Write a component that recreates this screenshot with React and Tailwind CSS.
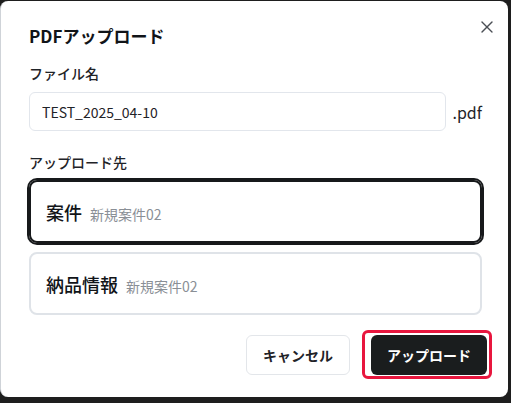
import { X } from 'lucide-react';

const targets = [
  { key: 'project', label: '案件', sub: '新規案件02' },
  { key: 'delivery', label: '納品情報', sub: '新規案件02' },
];

function App() {
  const selected = 'project';

  return (
    <div
      className="w-[511px] h-[403px] bg-[#1e1e1e] pt-[1px] overflow-hidden"
      style={{ fontFamily: '"Noto Sans CJK JP", "Noto Sans", sans-serif' }}
    >
      <div className="relative w-[508px] h-[396px] bg-white rounded-[8px] border-l border-[#cfd3d8] pl-[28px] pr-[26px] pt-[21px] flex flex-col">
        {/* Close */}
        <button className="absolute right-[11px] top-[16px] text-[#4b4f55]">
          <X size={20} strokeWidth={1.6} />
        </button>

        <h2 className="text-[17px] leading-7 font-semibold text-[#111418]">PDFアップロード</h2>

        {/* File name */}
        <label className="mt-[13px] text-sm leading-5 font-medium text-[#1f2328]">ファイル名</label>
        <div className="mt-[9px] flex items-center gap-[7px]">
          <input
            className="flex-1 h-[39px] border border-[#e2e6ec] rounded-md px-3 text-sm text-[#1f2328] outline-none"
            defaultValue="TEST_2025_04-10"
          />
          <span className="text-base text-[#1f2328]">.pdf</span>
        </div>

        {/* Destination */}
        <label className="mt-[21px] text-sm leading-5 font-medium text-[#1f2328]">アップロード先</label>
        <div className="mt-[8px] flex flex-col gap-[9px]">
          {targets.map((t) => (
            <div
              key={t.key}
              className={`h-[63px] rounded-lg border-2 px-[15px] flex items-center ${
                selected === t.key ? 'border-[#17191b] ring-2 ring-[#17191b]' : 'border-[#dfe3e8]'
              }`}
            >
              <div className="flex items-baseline gap-2">
                <span className="text-lg font-medium text-[#111418]">{t.label}</span>
                <span className="text-sm text-[#8a8f96]">{t.sub}</span>
              </div>
            </div>
          ))}
        </div>

        {/* Footer */}
        <div className="mt-[20px] -mr-[5px] flex justify-end gap-[21px]">
          <button className="h-[40px] w-[104px] rounded-md border border-[#e3e6ea] bg-white text-sm font-semibold text-[#1f2328]">
            キャンセル
          </button>
          <div className="relative">
            <span className="absolute -left-[9px] -top-[5px] -right-[5px] -bottom-[4px] border-[3px] border-[#e8163e] rounded-[6px]" />
            <button className="relative h-[40px] w-[116px] rounded-md bg-[#1a1d1e] text-sm font-semibold text-white">
              アップロード
            </button>
          </div>
        </div>
      </div>
    </div>
  );
}

export default App;
